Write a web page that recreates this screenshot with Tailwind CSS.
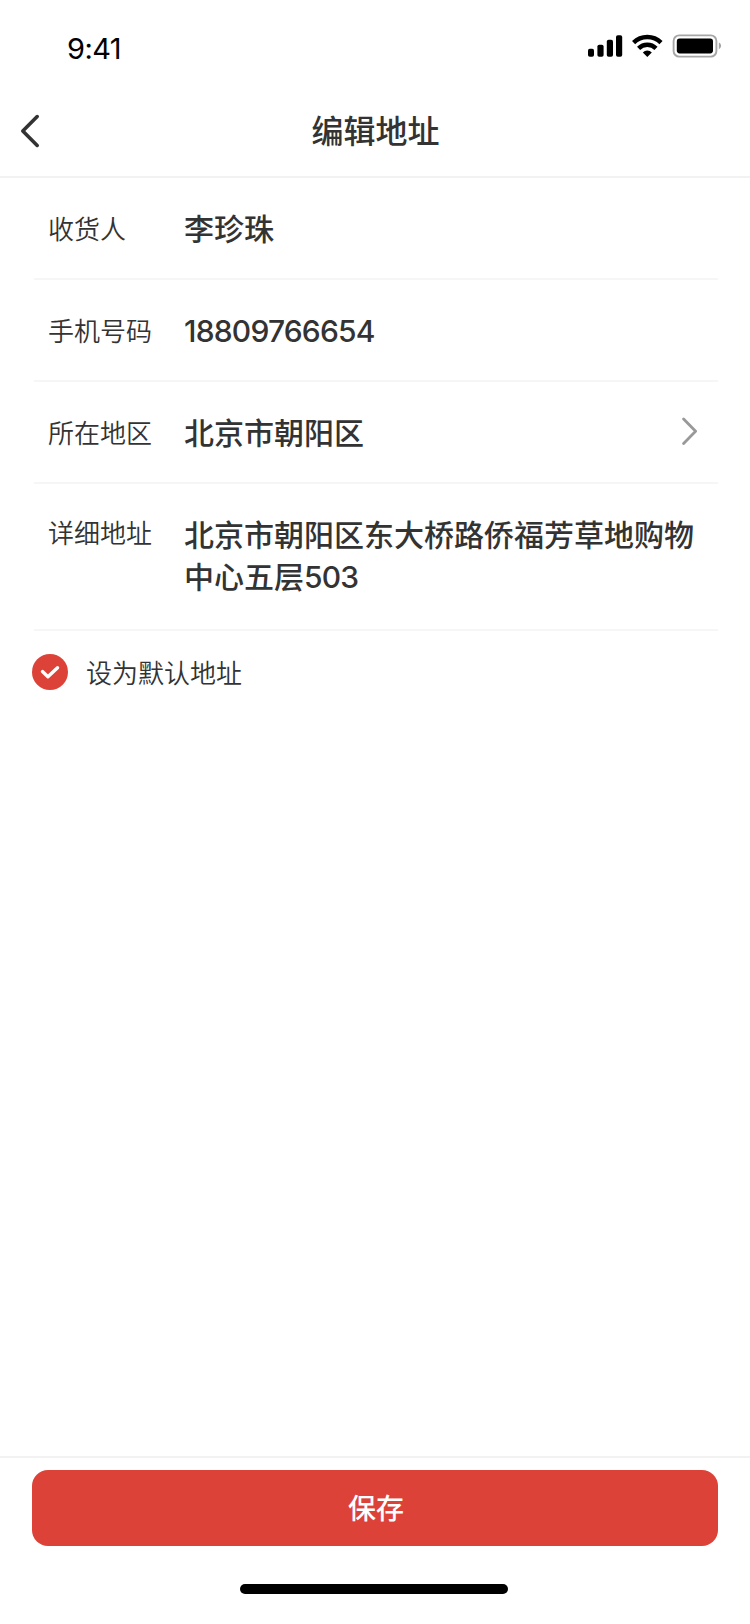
<!DOCTYPE html>
<html lang="zh-CN">
  <head>
    <meta charset="UTF-8" />
    <meta name="viewport" content="width=device-width, initial-scale=1.0" />
    <title>编辑地址</title>
    <script src="https://cdn.jsdelivr.net/npm/@tailwindcss/browser@4"></script>
  </head>

  <body class="flex flex-col h-screen overflow-hidden bg-white text-[#333] antialiased font-['Inter','Noto_Sans_CJK_SC',sans-serif]">
    <!-- Status bar -->
    <div class="flex justify-between h-[88px] pl-[67px] pr-[28px] text-black">
      <span class="pt-[28px] text-[29px] leading-[42px] tracking-[-0.6px]">9:41</span>
      <svg class="mt-[32px] w-[136px] h-[28px]" viewBox="586 32 136 28" fill="currentColor">
        <rect x="588" y="48.8" width="6" height="8" rx="1.8" />
        <rect x="597.4" y="44.7" width="6.2" height="12.1" rx="1.8" />
        <rect x="606.8" y="39.8" width="6.2" height="17" rx="1.8" />
        <rect x="616" y="35.2" width="6.2" height="21.6" rx="1.8" />
        <g fill="none" stroke="currentColor" stroke-width="4.4">
          <path d="M633.6 42.6a19.4 19.4 0 0 1 27.4 0" />
          <path d="M638.6 48.4a12.3 12.3 0 0 1 17.4 0" />
        </g>
        <path d="M642.8 52.4a6.4 6.4 0 0 1 9 0l-4.5 4.6z" />
        <rect x="673.6" y="35.4" width="42.8" height="21.2" rx="5.6" fill="none" stroke="#a6a6a6" stroke-width="1.9" />
        <rect x="676.8" y="38.6" width="36.2" height="14.8" rx="2.8" />
        <path d="M718.8 42.4c1.4.6 2.3 1.9 2.3 3.4s-.9 2.8-2.3 3.4z" fill="#a6a6a6" />
      </svg>
    </div>

    <!-- Header -->
    <header class="grid grid-cols-[80px_1fr_80px] items-center h-[90px] border-b-2 border-[#f2f2f2]">
      <button class="pl-5">
        <svg class="w-5 h-[34px] relative -top-[1px]" viewBox="0 0 20 34" fill="none" stroke="currentColor" stroke-width="3.6" stroke-linecap="round" stroke-linejoin="round">
          <path d="M17.2 2.6 2.8 17l14.4 14.4" />
        </svg>
      </button>
      <h1 class="pl-[1px] text-center text-[32px] leading-[44px] font-medium">编辑地址</h1>
    </header>

    <!-- Form -->
    <main class="flex-1 pl-[34px] pr-[32px]">
      <div class="flex items-center h-[102px] pl-[14px] pt-[2px] border-b-2 border-[#f6f6f6]">
        <span class="w-[136px] text-[26px] font-[350]">收货人</span>
        <span class="text-[30px] font-medium">李珍珠</span>
      </div>
      <div class="flex items-center h-[102px] pl-[14px] pt-[2px] border-b-2 border-[#f6f6f6]">
        <span class="w-[136px] text-[26px] font-[350]">手机号码</span>
        <span class="text-[30px] font-medium tracking-[-0.8px]">18809766654</span>
      </div>
      <div class="flex items-center h-[102px] pl-[14px] pr-5 pt-[2px] border-b-2 border-[#f6f6f6]">
        <span class="w-[136px] text-[26px] font-[350]">所在地区</span>
        <span class="flex-1 text-[30px] font-medium">北京市朝阳区</span>
        <svg class="w-4 h-[29px] mb-1" viewBox="0 0 16 29" fill="none" stroke="#999" stroke-width="2.8" stroke-linecap="round" stroke-linejoin="round">
          <path d="M1.6 2.1 13.6 14.3 1.6 26.5" />
        </svg>
      </div>
      <div class="flex items-start h-[147px] pl-[14px] pt-[30px] border-b-2 border-[#f6f6f6]">
        <span class="w-[136px] pt-[1px] text-[26px] leading-[38px] font-[350]">详细地址</span>
        <p class="w-[512px] text-[30px] leading-[42px] font-medium">北京市朝阳区东大桥路侨福芳草地购物中心五层<span class="tracking-[-0.8px]">503</span></p>
      </div>
      <label class="flex items-center gap-[18px] h-[84px] -ml-[2px]">
        <svg class="w-9 h-9 mb-[2px]" viewBox="0 0 36 36" fill="none">
          <circle cx="18" cy="18" r="18" fill="#dc4238" />
          <path d="m10.5 17.6 5.4 5.1 9.6-9" stroke="#fff" stroke-width="3.4" stroke-linecap="round" stroke-linejoin="round" />
        </svg>
        <span class="text-[26px] font-[350]">设为默认地址</span>
      </label>
    </main>

    <!-- Save -->
    <footer class="h-[168px] px-8 pt-3 border-t-2 border-[#f2f2f2]">
      <button class="block w-full h-[76px] pt-[2px] pl-[2px] rounded-2xl bg-[#dc4238] text-white text-[28px] font-medium">保存</button>
      <div class="w-[268px] h-[10px] mt-[38px] ml-[208px] rounded-full bg-black"></div>
    </footer>
  </body>
</html>
